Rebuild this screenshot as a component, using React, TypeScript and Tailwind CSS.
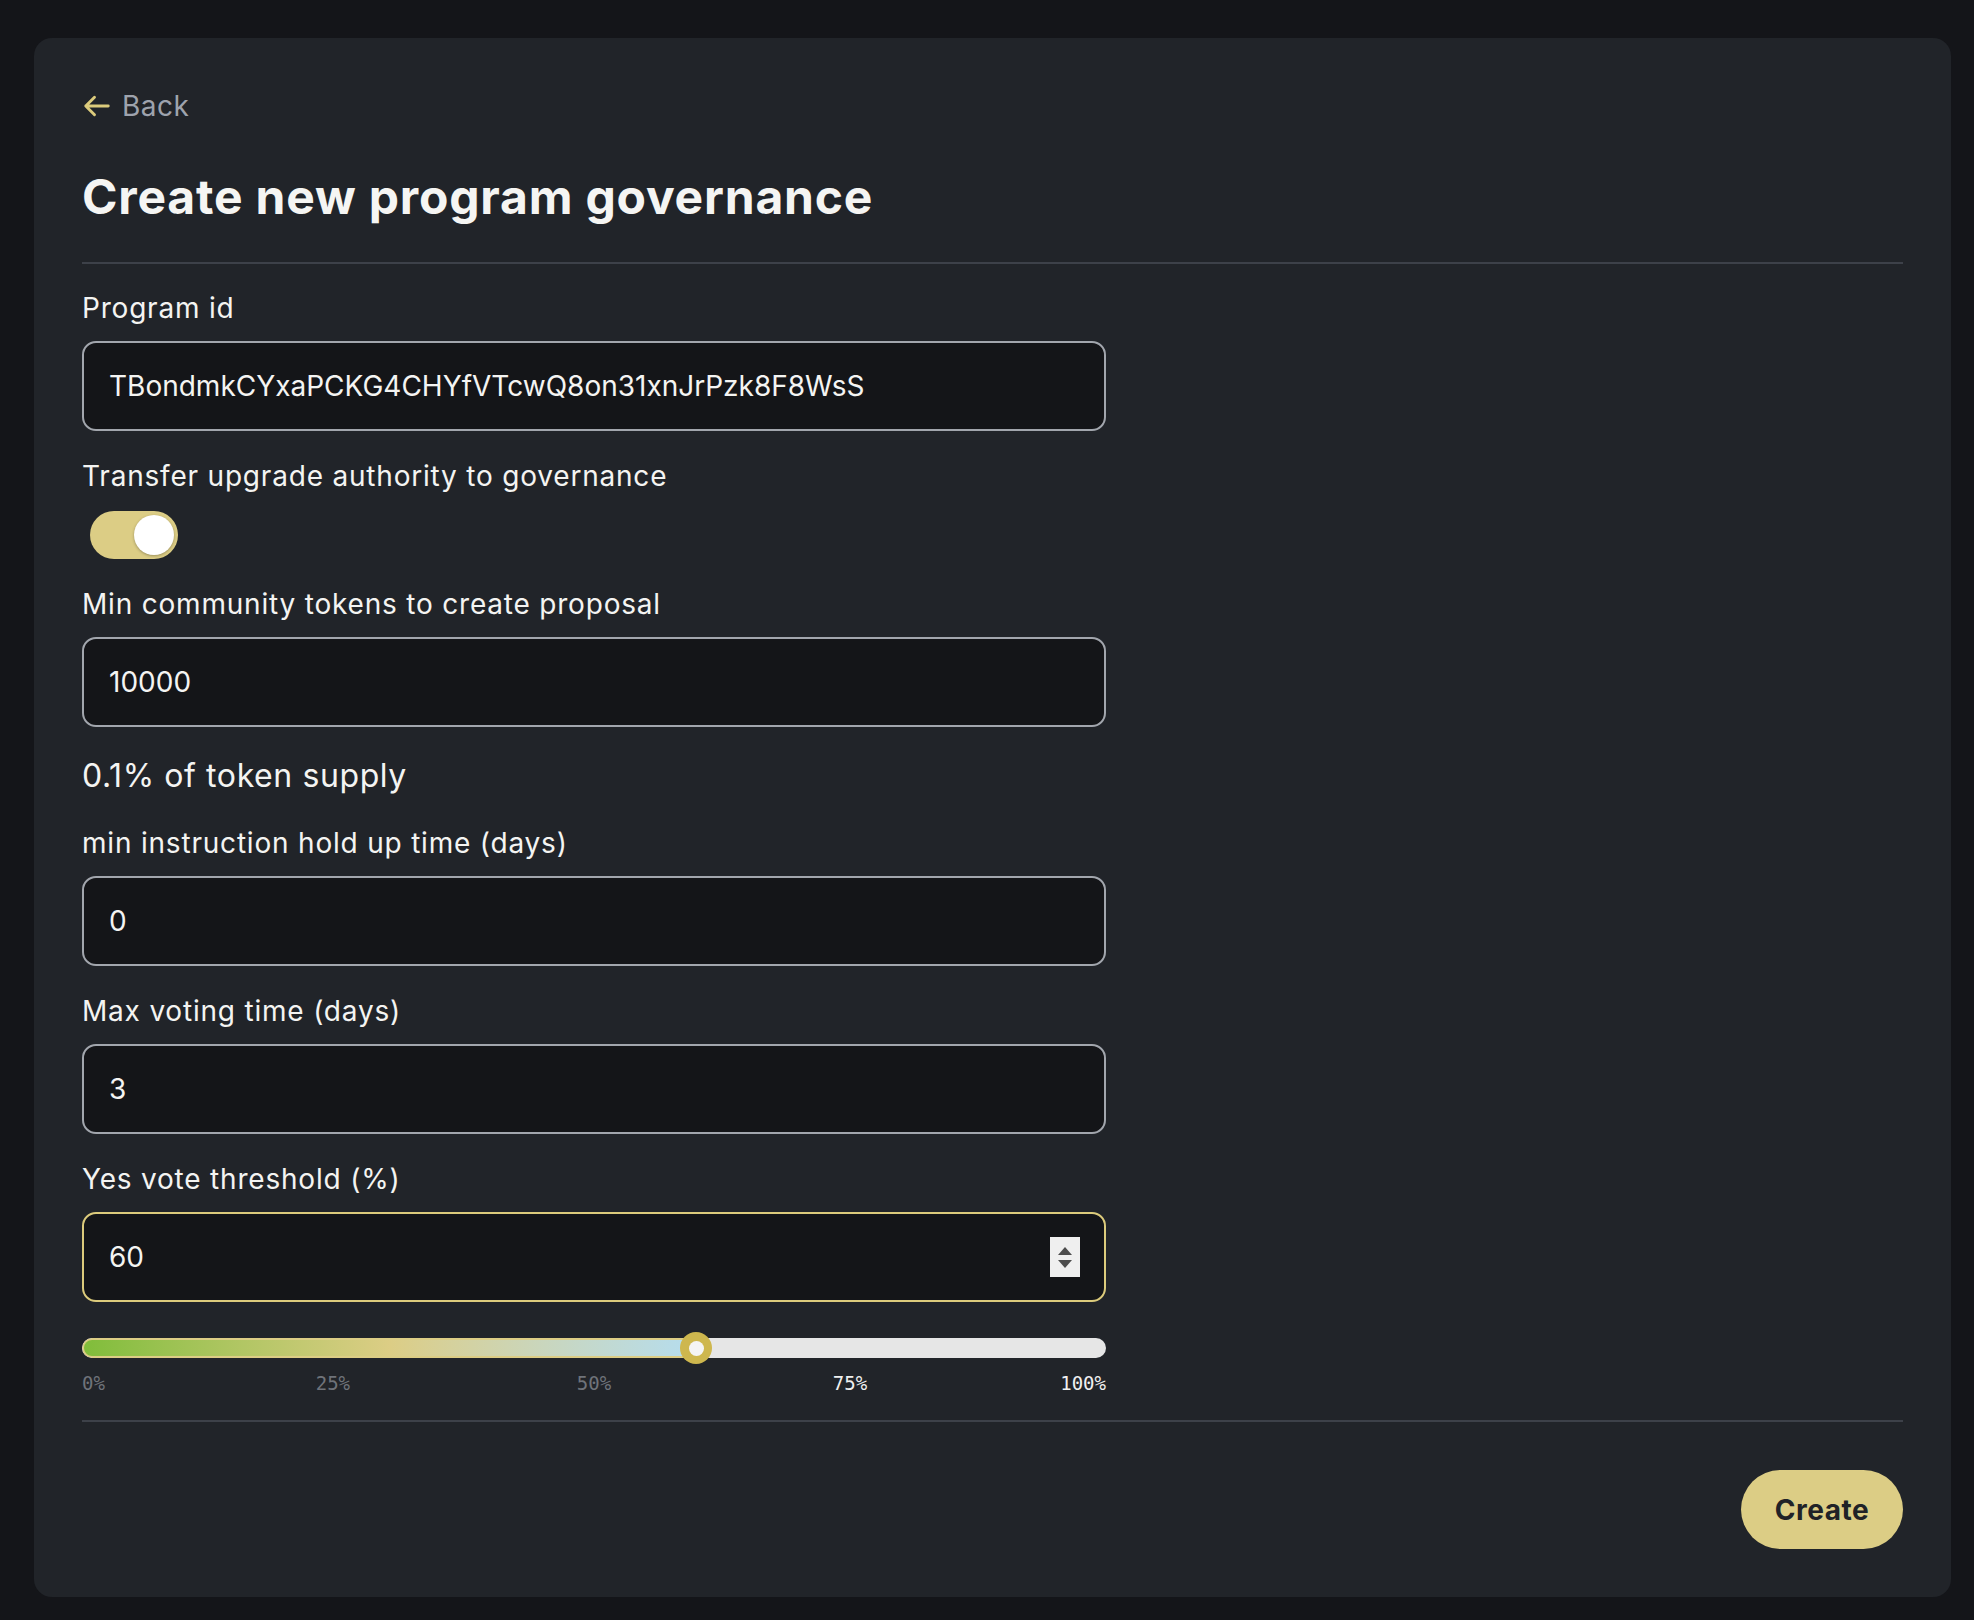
import { useState } from 'react';

const FONT = { fontFamily: 'Inter, "Noto Sans", sans-serif' };
const MONO = { fontFamily: '"DejaVu Sans Mono", "Liberation Mono", monospace' };

function Field({
  label,
  value,
  focused,
  spinner,
}: {
  label: string;
  value: string;
  focused?: boolean;
  spinner?: boolean;
}) {
  return (
    <div className="flex flex-col">
      <label className="text-[28px] leading-[42px] tracking-[0.8px] text-[#f4f4f2]">{label}</label>
      <div
        className={
          focused
            ? 'mt-3 flex h-[90px] w-[1024px] items-center justify-between rounded-[14px] border-2 border-[#dccb7c] bg-[#141518] pl-[25px] pr-[24px]'
            : 'mt-3 flex h-[90px] w-[1024px] items-center justify-between rounded-[14px] border-2 border-[#a2a6ad] bg-[#141518] pl-[25px] pr-[24px]'
        }
      >
        <span className="text-[28px] text-[#f4f4f2]">{value}</span>
        {spinner && (
          <div className="flex h-[40px] w-[30px] flex-col items-center justify-center gap-[5px] bg-[#efefef]">
            <svg width="14" height="8" viewBox="0 0 14 8">
              <path d="M7 0 L14 8 L0 8 Z" fill="#4d4d4d" />
            </svg>
            <svg width="14" height="8" viewBox="0 0 14 8">
              <path d="M0 0 L14 0 L7 8 Z" fill="#4d4d4d" />
            </svg>
          </div>
        )}
      </div>
    </div>
  );
}

export default function App() {
  const [enabled, setEnabled] = useState(true);
  const threshold = 60;

  return (
    <div className="min-h-screen bg-[#141519] pl-[34px] pr-[23px] pt-[38px] pb-[23px]" style={FONT}>
      <div className="rounded-[18px] bg-[#212429] px-12 pt-[47px] pb-12">
        <button className="flex h-[42px] items-center gap-[10px] text-[28px] tracking-[0.5px] text-[#9ea3ad]">
          <svg width="30" height="30" viewBox="0 0 24 24" fill="none" stroke="#dccb7c" strokeWidth="2.3" strokeLinecap="round" strokeLinejoin="round">
            <path d="M10 19l-7-7m0 0l7-7m-7 7h18" />
          </svg>
          Back
        </button>

        <h1 className="mt-[42px] text-[48px] font-bold leading-[56px] tracking-[0.8px] text-[#f5f5f3]">
          Create new program governance
        </h1>

        <div className="mt-[37px] h-[2px] bg-[#3d4149]" />

        <div className="mt-[23px] flex flex-col">
          <Field label="Program id" value="TBondmkCYxaPCKG4CHYfVTcwQ8on31xnJrPzk8F8WsS" />

          <label className="mt-6 text-[28px] leading-[42px] tracking-[0.8px] text-[#f4f4f2]">
            Transfer upgrade authority to governance
          </label>
          <button
            onClick={() => setEnabled(!enabled)}
            className={
              enabled
                ? 'mt-[14px] ml-[8px] flex h-[48px] w-[88px] items-center justify-end rounded-full bg-[#dccd85] px-[4px]'
                : 'mt-[14px] ml-[8px] flex h-[48px] w-[88px] items-center justify-start rounded-full bg-[#4b5058] px-[4px]'
            }
          >
            <span className="h-[40px] w-[40px] rounded-full bg-white shadow-[0_1px_3px_rgba(0,0,0,0.3)]" />
          </button>

          <div className="mt-6">
            <Field label="Min community tokens to create proposal" value="10000" />
          </div>

          <p className="mt-6 text-[32px] leading-[49px] tracking-[0.6px] text-[#f4f4f2]">0.1% of token supply</p>

          <div className="mt-[22px]">
            <Field label="min instruction hold up time (days)" value="0" />
          </div>
          <div className="mt-6">
            <Field label="Max voting time (days)" value="3" />
          </div>
          <div className="mt-6">
            <Field label="Yes vote threshold (%)" value="60" focused spinner />
          </div>

          <div className="mt-[30px] w-[1024px]">
            <div className="relative flex h-[32px] items-center">
              <div className="h-[20px] w-full overflow-hidden rounded-full bg-[#e6e6e6]">
                <div
                  className="h-full rounded-l-full border-2 border-r-0 border-[#dccd85] bg-gradient-to-r from-[#80bd3a] via-[#dccd85] to-[#b5ddef]"
                  style={{ width: `${threshold}%` }}
                />
              </div>
              <div
                className="absolute top-0 flex h-[32px] w-[32px] -translate-x-1/2 items-center justify-center rounded-full bg-[#ceb74e]"
                style={{ left: `${threshold}%` }}
              >
                <div className="h-[15px] w-[15px] rounded-full bg-[#f4f4f4]" />
              </div>
            </div>
            <div className="relative mt-[7px] h-[24px] text-[19px] leading-[24px]" style={MONO}>
              <span className="absolute left-0 text-[#6f737a]">0%</span>
              <span className="absolute left-[24.5%] -translate-x-1/2 text-[#6f737a]">25%</span>
              <span className="absolute left-1/2 -translate-x-1/2 text-[#6f737a]">50%</span>
              <span className="absolute left-[75%] -translate-x-1/2 text-[#f0f0f0]">75%</span>
              <span className="absolute right-0 text-[#f0f0f0]">100%</span>
            </div>
          </div>
        </div>

        <div className="mt-[25px] h-[2px] bg-[#3d4149]" />

        <div className="mt-12 flex justify-end">
          <button className="h-[79px] w-[162px] rounded-full bg-[#dccd85] text-[28px] font-bold tracking-[0.5px] text-[#202227]">
            Create
          </button>
        </div>
      </div>
    </div>
  );
}
